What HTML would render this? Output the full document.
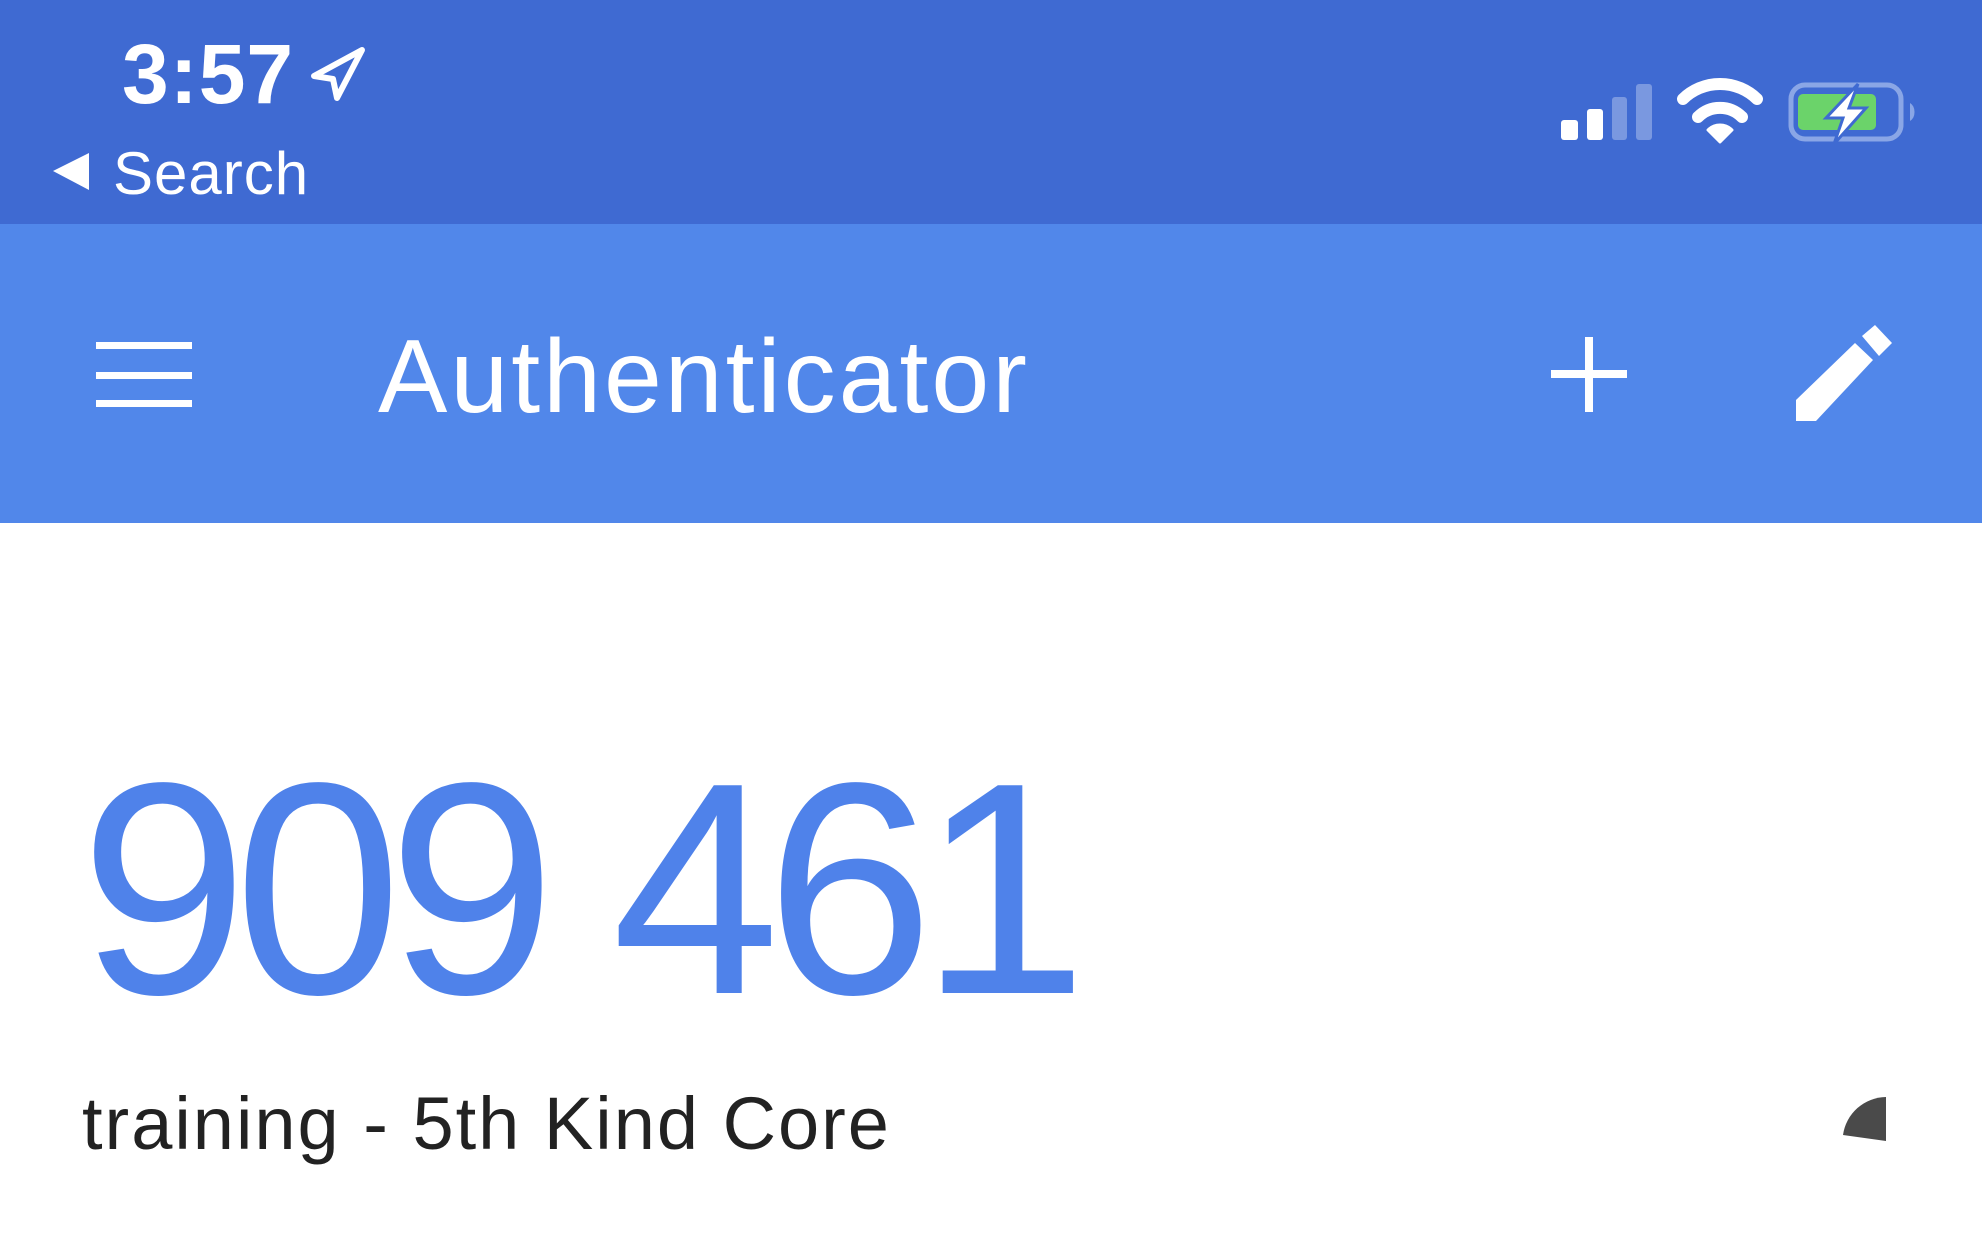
<!DOCTYPE html>
<html><head><meta charset="utf-8"><style>
html,body{margin:0;padding:0;}
body{width:1982px;height:1242px;position:relative;overflow:hidden;background:#fff;font-family:"Liberation Sans",sans-serif;}
.t{position:absolute;white-space:nowrap;line-height:1;}
</style></head><body>
<div style="position:absolute;left:0;top:0;width:1982px;height:224px;background:#3f6ad2"></div>
<div style="position:absolute;left:0;top:224px;width:1982px;height:299px;background:#5187ea"></div>

<div class="t" style="left:122px;top:32px;font-size:84px;font-weight:bold;color:#fff;letter-spacing:1px">3:57</div>
<svg style="position:absolute;left:0;top:0" width="1982" height="523">
<path d="M314,76 L362,50 L337,98 L333,79 Z" fill="none" stroke="#fff" stroke-width="6" stroke-linejoin="round"/>
<path d="M53,171 L89,153 L89,190 Z" fill="#fff"/>
<rect x="1561" y="120" width="17" height="20" rx="3" fill="#fff"/>
<rect x="1587" y="109" width="16" height="31" rx="3" fill="#fff"/>
<rect x="1612" y="97" width="15" height="43" rx="3" fill="#7a98e0"/>
<rect x="1636" y="84" width="16" height="56" rx="3" fill="#7a98e0"/>
<path d="M1683,99 A53,53 0 0 1 1757,99" fill="none" stroke="#fff" stroke-width="12" stroke-linecap="round"/>
<path d="M1698,117 A31,31 0 0 1 1742,117" fill="none" stroke="#fff" stroke-width="12" stroke-linecap="round"/>
<path d="M1720,142 L1708,130 A17,17 0 0 1 1732,130 Z" fill="#fff" stroke="#fff" stroke-width="3" stroke-linejoin="round"/>
<rect x="1791" y="85" width="110" height="54" rx="14" fill="none" stroke="#8aa6e6" stroke-width="5"/>
<path d="M1910,103 A8,10 0 0 1 1910,121 Z" fill="#8aa6e6"/>
<rect x="1798" y="94" width="78" height="36" rx="5" fill="#6bd36a"/>
<path d="M1858,84 L1826,118 L1843,118 L1834,144 L1866,108 L1849,108 Z" fill="#fff" stroke="#3f6ad2" stroke-width="3"/>
<rect x="96" y="342" width="96" height="7" fill="#fff"/>
<rect x="96" y="372" width="96" height="7" fill="#fff"/>
<rect x="96" y="400" width="96" height="7" fill="#fff"/>
<rect x="1551" y="370" width="76" height="8" fill="#fff"/>
<rect x="1585" y="337" width="8" height="75" fill="#fff"/>
<path d="M1796,400 L1796,421 L1816,421 L1873,360 L1855,343 Z" fill="#fff"/>
<path d="M1862,336 L1875,325 L1892,343 L1879,356 Z" fill="#fff"/>
</svg>
<div class="t" style="left:113px;top:144px;font-size:60px;color:#fff;letter-spacing:1px">Search</div>
<div class="t" style="left:378px;top:325px;font-size:104px;color:#fff;letter-spacing:3px">Authenticator</div>
<div class="t" style="left:80px;top:738px;font-size:302px;color:#4f82ea;letter-spacing:-14px">909 461</div>
<div class="t" style="left:82px;top:1087px;font-size:74px;color:#222;letter-spacing:2px">training - 5th Kind Core</div>
<svg style="position:absolute;left:1830px;top:1090px" width="70" height="60">
<path d="M56,51 L13,45 A44,44 0 0 1 56,7 Z" fill="#4a4a4a"/>
</svg>
</body></html>
